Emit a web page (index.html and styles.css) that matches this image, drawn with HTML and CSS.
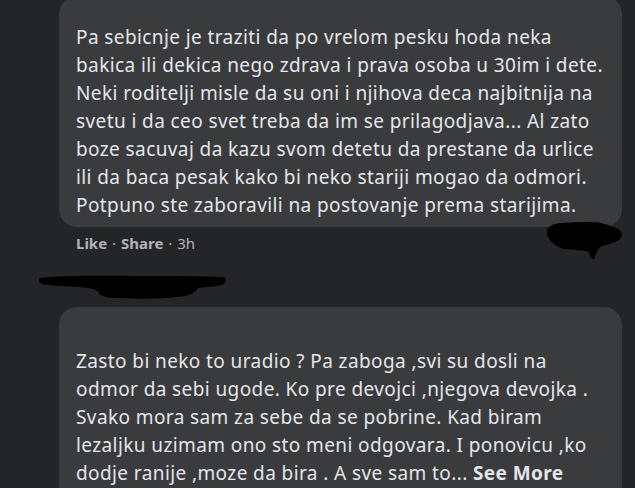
FILE: index.html
```html
<!DOCTYPE html>
<html>
<head>
    <meta charset="UTF-8">
    <title>Komentari</title>
    <link rel="stylesheet" href="styles.css">
</head>
<body>
    <div class="thread">
        <div class="comment">
            <div class="bubble first">
                <p class="text">Pa sebicnje je traziti da po vrelom pesku hoda neka<br>bakica ili dekica nego zdrava i prava osoba u 30im i dete.<br>Neki roditelji misle da su oni i njihova deca najbitnija na<br>svetu i da ceo svet treba da im se prilagodjava... Al zato<br>boze sacuvaj da kazu svom detetu da prestane da urlice<br>ili da baca pesak kako bi neko stariji mogao da odmori.<br>Potpuno ste zaboravili na postovanje prema starijima.</p>
                <svg class="blot" width="78" height="42" viewBox="0 0 78 42">
                    <path d="M3 8 C10 2 26 4 40 3 C52 2 62 6 70 9 C76 11 77 16 74 20 C70 24 62 25 56 27 C52 29 50 34 48 40 C46 41 44 38 43 33 C38 31 28 31 18 30 C12 28 5 24 2 18 C0 14 1 10 3 8 Z" fill="#000"/>
                </svg>
            </div>
            <div class="actions">
                <span class="action">Like</span>
                <span class="dot">·</span>
                <span class="action">Share</span>
                <span class="dot">·</span>
                <span class="time">3h</span>
            </div>
        </div>

        <div class="redacted">
            <svg width="190" height="26" viewBox="0 0 190 26">
                <path d="M2 4 C30 1 70 2 110 2 C140 2 165 2 186 3 C189 5 188 9 184 11 C175 13 165 13 160 14 C158 18 152 22 140 23 C120 25 95 25 80 24 C70 24 62 22 60 18 C58 15 52 14 42 13 C28 12 12 12 4 10 C0 8 0 5 2 4 Z" fill="#000"/>
            </svg>
        </div>

        <div class="comment">
            <div class="bubble second">
                <p class="text">Zasto bi neko to uradio ? Pa zaboga ,svi su dosli na<br>odmor da sebi ugode. Ko pre devojci ,njegova devojka .<br>Svako mora sam za sebe da se pobrine. Kad biram<br>lezaljku uzimam ono sto meni odgovara. I ponovicu ,ko<br>dodje ranije ,moze da bira . A sve sam to... <span class="more">See More</span></p>
            </div>
        </div>
    </div>
</body>
</html>
```
FILE: styles.css
```css
body {
    margin: 0;
    background-color: #242527;
    font-family: "Noto Sans", "Open Sans", sans-serif;
    color: #e4e6eb;
    overflow: hidden;
}
.thread {
    width: 584px;
    padding-left: 38px;
}
.comment {
    margin-left: 21px;
}
.bubble {
    position: relative;
    background-color: #3a3b3d;
    border-radius: 18px;
    padding: 0 12px 0 17px;
}
.bubble.first {
    margin-top: -4px;
    padding-top: 27px;
    padding-bottom: 8px;
}
.bubble.second {
    padding-top: 40px;
    padding-bottom: 40px;
}
.text {
    margin: 0;
    font-size: 19px;
    line-height: 28px;
    letter-spacing: 0.4px;
    white-space: nowrap;
}
.more {
    font-weight: bold;
}
.blot {
    position: absolute;
    right: -2px;
    bottom: -34px;
}
.actions {
    margin-top: 6px;
    padding-left: 17px;
    font-size: 15px;
    line-height: 20px;
    color: #b0b3b8;
}
.action {
    font-weight: bold;
}
.dot {
    margin: 0 1px;
}
.redacted {
    margin-top: 21px;
    height: 26px;
}
.redacted svg {
    display: block;
}
.redacted + .comment {
    margin-top: 7px;
}
```
